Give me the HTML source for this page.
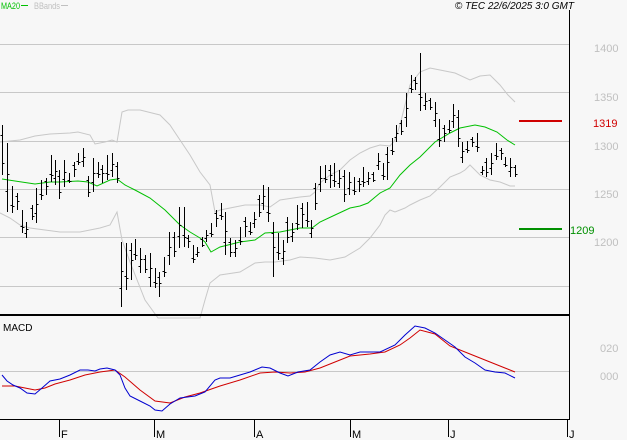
<!DOCTYPE html>
<html><head><meta charset="utf-8">
<style>
html,body{margin:0;padding:0;background:#f7f7f7;}
svg{display:block;}
text{font-family:"Liberation Sans",sans-serif;}
</style></head>
<body>
<svg id="s" width="627" height="440" viewBox="0 0 627 440" xmlns="http://www.w3.org/2000/svg" shape-rendering="crispEdges">
<rect width="627" height="440" fill="#f7f7f7"/>
<g stroke="#c8c8c8" stroke-width="1">
<line x1="0" y1="44.5" x2="569" y2="44.5"/>
<line x1="0" y1="92.5" x2="569" y2="92.5"/>
<line x1="0" y1="141.5" x2="569" y2="141.5"/>
<line x1="0" y1="189.5" x2="569" y2="189.5"/>
<line x1="0" y1="237.5" x2="569" y2="237.5"/>
<line x1="0" y1="286.5" x2="569" y2="286.5"/>
<line x1="0" y1="371.5" x2="569" y2="371.5"/>
</g>
<text x="1" y="9" font-size="9.5" fill="#00c000" textLength="19" lengthAdjust="spacingAndGlyphs">MA20</text>
<line x1="21" y1="5.5" x2="28" y2="5.5" stroke="#00c000"/>
<text x="34" y="9" font-size="9.5" fill="#c0c0c0" textLength="26" lengthAdjust="spacingAndGlyphs">BBands</text>
<line x1="61" y1="5.5" x2="68" y2="5.5" stroke="#c0c0c0"/>
<text x="574" y="9" font-size="10" font-style="italic" fill="#000" text-anchor="end">© TEC 22/6/2025 3:0 GMT</text>
<g fill="none" stroke="#c8c8c8" stroke-width="1" shape-rendering="auto">
<polyline points="0,142 10,141 20,140 35,136 50,134 70,133 78,132 90,135 95,144 105,142 112,140 117,142 122,112 128,110 140,110 160,115 170,125 180,140 190,155 200,172 210,185 215,212 220,210 235,207 245,205 260,205 270,207 280,200 300,197 310,196 315,192 320,183 330,175 340,170 350,160 360,153 370,148 380,145 390,146 395,140 400,125 405,105 410,85 420,72 430,68 440,70 455,73 470,80 480,76 490,75 500,85 508,95 515,102"/>
<polyline points="0,213 10,218 20,225 30,228 45,230 60,232 80,232 100,228 110,225 117,212 122,240 130,262 145,300 158,318 200,318 205,300 210,283 220,275 240,272 255,263 265,262 275,262 290,260 300,257 315,258 330,260 345,257 360,248 370,238 380,225 385,215 390,210 395,212 405,208 410,205 420,200 430,196 440,187 450,177 460,173 465,170 470,165 480,175 490,180 500,182 510,186 515,186"/>
</g>
<polyline fill="none" stroke="#00c000" stroke-width="1" shape-rendering="auto" points="2,179 15,181 35,184 50,182 60,182 78,181 88,182 97,186 110,180 117,179 125,185 135,190 150,198 165,210 180,225 190,232 200,238 205,242 211,252 220,247 240,242 255,240 265,233 280,232 290,230 300,228 312,228 320,222 335,215 350,208 360,206 368,203 380,193 390,188 400,175 410,165 420,157 435,142 450,133 460,128 475,125 485,127 497,132 507,140 515,145"/>
<g id="bars" stroke="#000" stroke-width="1"></g>
<rect x="0" y="314" width="570" height="2" fill="#000"/>
<line x1="569.5" y1="10" x2="569.5" y2="420" stroke="#000"/>
<line x1="0" y1="419.5" x2="570" y2="419.5" stroke="#000"/>
<g stroke="#000">
<line x1="59.5" y1="420" x2="59.5" y2="437"/>
<line x1="154.5" y1="420" x2="154.5" y2="437"/>
<line x1="254.5" y1="420" x2="254.5" y2="437"/>
<line x1="350.5" y1="420" x2="350.5" y2="437"/>
<line x1="448.5" y1="420" x2="448.5" y2="437"/>
<line x1="567.5" y1="420" x2="567.5" y2="437"/>
</g>
<g font-size="11" fill="#000">
<text x="61" y="438">F</text>
<text x="156" y="438">M</text>
<text x="256" y="438">A</text>
<text x="352" y="438">M</text>
<text x="450" y="438">J</text>
<text x="569" y="438">J</text>
</g>
<g font-size="11" fill="#c0c0c0">
<text x="594" y="52">1400</text>
<text x="594" y="101">1350</text>
<text x="594" y="150">1300</text>
<text x="594" y="198">1250</text>
<text x="594" y="246">1200</text>
<text x="600" y="352">020</text>
<text x="600" y="380">000</text>
</g>
<rect x="519" y="120" width="43" height="2" fill="#d00000"/>
<text x="593" y="127" font-size="11" fill="#d00000">1319</text>
<rect x="519" y="228" width="43" height="2" fill="#009000"/>
<text x="570" y="234" font-size="11" fill="#009000">1209</text>
<text x="3" y="331" font-size="10" fill="#000">MACD</text>
<polyline fill="none" stroke="#d00000" shape-rendering="auto" points="2,386 15,386 25,388 35,390 45,388 55,384 70,380 85,375 100,372 115,370 125,377 140,390 155,401 170,403 185,397 200,393 220,386 240,380 260,373 275,372 290,373 305,372 320,368 335,362 350,356 370,354 385,352 400,345 410,338 420,330 435,334 450,346 470,354 490,362 505,368 515,372"/>
<polyline fill="none" stroke="#0000d0" shape-rendering="auto" points="2,375 7,381 13,385 20,388 27,393 35,394 42,388 50,381 60,379 70,375 80,370 88,370 95,371 100,369 107,368 115,370 120,375 125,388 130,396 140,401 150,406 155,410 162,411 170,404 180,398 195,396 205,392 215,380 220,378 230,378 240,375 250,372 262,367 270,368 280,373 288,376 298,372 310,370 320,362 330,355 340,352 350,355 360,352 380,352 395,345 405,335 415,326 425,328 435,333 445,340 455,347 465,357 475,363 485,370 495,372 505,373 515,378"/>
</svg>
<script>
var d=[[2,125,175],[7,143,212],[12,186,213],[17,193,210],[22,210,233],[26,222,238],[32,205,220],[36,188,223],[41,180,200],[46,178,195],[51,155,182],[55,160,185],[59,170,199],[64,160,187],[69,173,183],[74,162,177],[78,153,165],[83,148,167],[88,176,197],[93,158,192],[98,162,178],[102,165,183],[107,155,180],[112,153,177],[117,162,183],[121,242,307],[126,243,290],[131,243,280],[135,239,260],[140,248,273],[145,255,273],[150,253,287],[155,268,288],[159,272,297],[164,257,277],[169,232,265],[174,232,257],[179,207,248],[184,207,247],[188,235,248],[193,245,263],[197,247,257],[202,237,247],[206,230,242],[211,223,237],[216,210,227],[221,203,220],[225,212,255],[230,238,257],[235,240,257],[240,227,245],[245,217,237],[250,222,235],[254,212,228],[259,195,217],[263,185,210],[268,187,222],[273,222,277],[278,233,260],[283,240,265],[287,217,243],[292,223,242],[297,205,230],[302,203,228],[307,202,227],[311,220,238],[315,183,210],[320,166,192],[325,165,183],[330,165,188],[334,163,187],[339,170,188],[344,170,202],[349,172,195],[354,177,195],[359,178,192],[363,167,187],[368,172,185],[373,172,182],[378,153,170],[383,163,180],[387,147,180],[392,138,155],[396,125,142],[401,120,135],[406,93,127],[411,75,93],[415,77,90],[420,53,111],[425,93,110],[430,98,110],[435,102,127],[439,119,147],[444,125,142],[449,120,133],[453,104,128],[458,110,147],[462,142,163],[467,141,153],[472,137,147],[477,133,152],[482,166,175],[486,158,177],[491,153,175],[496,143,160],[501,148,160],[505,157,167],[510,158,177],[515,165,177]];
var p="";
for(var i=0;i<d.length;i++){var x=d[i][0]+0.5,h=d[i][1],l=d[i][2];var o=Math.round(h+(l-h)*(i%3==0?0.2:0.7)),c=Math.round(h+(l-h)*(i%2?0.45:0.75));
p+="M"+x+" "+h+"V"+l+"M"+(x-2)+" "+(o+0.5)+"H"+x+"M"+x+" "+(c+0.5)+"H"+(x+2);}
var e=document.createElementNS("http://www.w3.org/2000/svg","path");e.setAttribute("d",p);e.setAttribute("fill","none");e.setAttribute("stroke","#000");
document.getElementById("bars").appendChild(e);
</script>
</body></html>
